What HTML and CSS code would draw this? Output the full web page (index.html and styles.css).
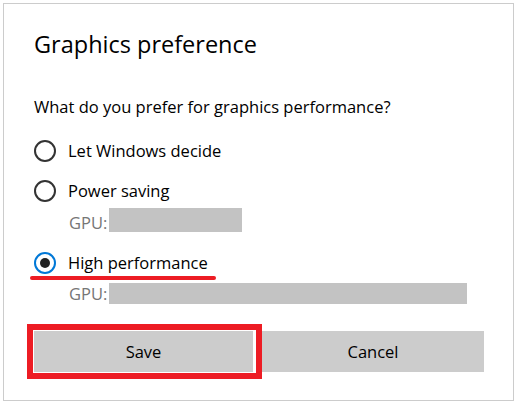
FILE: index.html
```html
<!DOCTYPE html>
<html lang="en">
<head>
<meta charset="utf-8">
<title>Graphics preference</title>
<link rel="stylesheet" href="styles.css">
</head>
<body>
<div class="dialog">
  <h1 class="title">Graphics preference</h1>
  <p class="question">What do you prefer for graphics performance?</p>
  <div class="options">
    <div class="option">
      <span class="radio"></span>
      <span class="label">Let Windows decide</span>
    </div>
    <div class="option option-gap">
      <span class="radio"></span>
      <span class="label">Power saving</span>
    </div>
    <div class="gpu gpu-first">
      <span class="gpu-label">GPU:</span>
      <span class="gpu-bar bar-short"></span>
    </div>
    <div class="option option-selected">
      <span class="radio radio-checked"><span class="dot"></span></span>
      <span class="label">High performance</span>
      <span class="underline"></span>
    </div>
    <div class="gpu gpu-second">
      <span class="gpu-label">GPU:</span>
      <span class="gpu-bar bar-long"></span>
    </div>
  </div>
  <div class="buttons">
    <button class="btn btn-save" type="button">Save<span class="highlight"></span></button>
    <button class="btn btn-cancel" type="button">Cancel</button>
  </div>
</div>
</body>
</html>
```

FILE: styles.css
```css
html, body {
  margin: 0;
  padding: 0;
  background: #ffffff;
}

body {
  font-family: "Open Sans", "Noto Sans", "Liberation Sans", sans-serif;
  color: #000000;
}

.dialog {
  box-sizing: border-box;
  margin: 3px 0 0 3px;
  width: 511px;
  height: 398px;
  border: 1px solid #cccccc;
  padding: 25px 0 0 30px;
}

.title {
  margin: 0;
  font-size: 23.5px;
  font-weight: 400;
  line-height: 31px;
}

.question {
  margin: 36px 0 0 0;
  font-size: 16.5px;
  line-height: 22px;
}

.options {
  margin-top: 22px;
  display: flex;
  flex-direction: column;
}

.option {
  position: relative;
  display: flex;
  align-items: center;
  height: 22px;
  gap: 12px;
}

.option-gap {
  margin-top: 18px;
}

.label {
  font-size: 16.5px;
  line-height: 22px;
}

.radio {
  box-sizing: border-box;
  width: 22px;
  height: 22px;
  border: 2px solid #333333;
  border-radius: 50%;
  flex: none;
  display: flex;
  align-items: center;
  justify-content: center;
}

.radio-checked {
  border: 2.5px solid #0078d7;
}

.dot {
  width: 10px;
  height: 10px;
  border-radius: 50%;
  background: #222222;
}

.option-selected {
  margin-top: 17px;
}

.underline {
  position: absolute;
  left: -4px;
  top: 24px;
  width: 186px;
  height: 4px;
  border-radius: 2px;
  background: #ed1c24;
}

.gpu {
  display: flex;
  align-items: flex-start;
  gap: 2px;
  padding-left: 35px;
}

.gpu-label {
  font-size: 16.5px;
  color: #767676;
}

.gpu-bar {
  display: block;
  background: #c3c3c3;
}

.gpu-first {
  margin-top: 6px;
}

.gpu-first .gpu-label {
  line-height: 24px;
  padding-top: 3px;
}

.bar-short {
  width: 133px;
  height: 24px;
}

.gpu-second {
  margin-top: 9px;
}

.gpu-second .gpu-label {
  line-height: 21px;
}

.bar-long {
  width: 358px;
  height: 21px;
}

.buttons {
  display: flex;
  gap: 9px;
  margin-top: 27px;
}

.btn {
  position: relative;
  height: 41px;
  border: none;
  padding: 0;
  margin: 0;
  background: #cccccc;
  font-family: inherit;
  font-size: 16.5px;
  color: #000000;
}

.btn-save {
  width: 219px;
}

.btn-cancel {
  width: 222px;
}

.highlight {
  position: absolute;
  left: -7px;
  top: -7px;
  right: -9px;
  bottom: -7px;
  border: 6px solid #ed1c24;
}
```
